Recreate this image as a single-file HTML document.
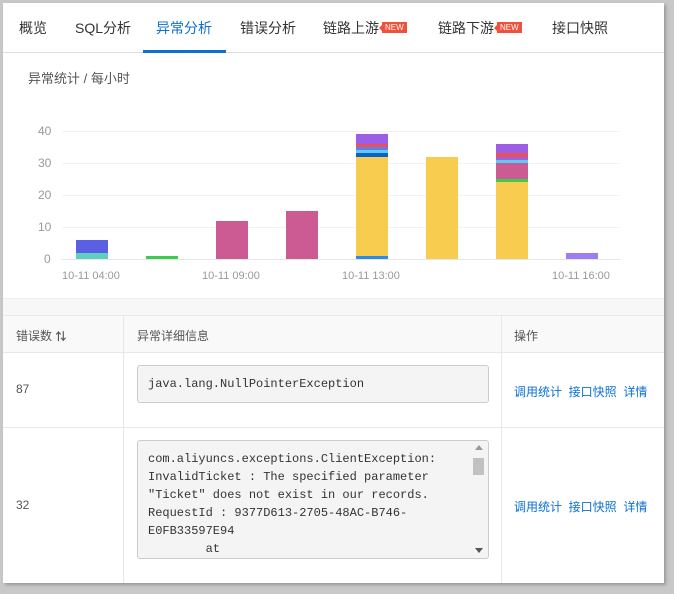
<!DOCTYPE html>
<html><head><meta charset="utf-8"><style>
*{margin:0;padding:0;box-sizing:border-box}
body{width:674px;height:594px;background:#c8c8c8;font-family:"Liberation Sans","Noto Sans CJK SC",sans-serif;position:relative;overflow:hidden}
.card{position:absolute;left:3px;top:3px;width:661px;height:580px;background:#fff;box-shadow:2px 2px 3px #999}
.tabs{position:absolute;left:0;top:0;width:661px;height:50px;border-bottom:1px solid #ddd}
.tab{position:absolute;top:15px;font-size:14px;color:#333}
.tab.on{color:#0b70d0}
.ul{position:absolute;left:140px;top:47px;width:83px;height:3px;background:#0b70d0}
.new{display:inline-block;background:#f1503a;color:#fff;font-size:8px;line-height:11px;padding:0 3px;vertical-align:top;margin-top:4px;margin-left:3px;position:relative}
.new:before{content:"";position:absolute;left:-3px;top:3px;border:3px solid transparent;border-right:3px solid #f1503a;border-left:0}
.t{position:absolute;font-size:12px;color:#999}
.g{position:absolute;left:59px;width:558px;height:1px;background:#f2f2f2}
.s{position:absolute;width:32px}
.lbl{position:absolute;font-size:11px;color:#999;top:267px}
.td{position:absolute;border-right:1px solid #e8e8e8}
.hl{position:absolute;left:0;width:661px;height:1px;background:#e8e8e8}
.box{position:absolute;left:134px;width:352px;background:#f4f4f4;border:1px solid #ccc;border-radius:3px;font-family:"Liberation Mono","Noto Sans CJK SC",monospace;font-size:12px;color:#333}
.lk{position:absolute;left:511px;font-size:12px;color:#0b70d0}
</style></head><body>
<div class="card">
<div class="tabs">
<span class="tab" style="left:16px">概览</span>
<span class="tab" style="left:72px">SQL分析</span>
<span class="tab on" style="left:153px">异常分析</span>
<span class="tab" style="left:237px">错误分析</span>
<span class="tab" style="left:320px">链路上游<span class="new">NEW</span></span>
<span class="tab" style="left:435px">链路下游<span class="new">NEW</span></span>
<span class="tab" style="left:549px">接口快照</span>
<div class="ul"></div>
</div>
<div style="position:absolute;left:25px;top:65px;font-size:13px;color:#555">异常统计 / 每小时</div>
<span class="t" style="left:35px;top:121px">40</span>
<span class="t" style="left:35px;top:153px">30</span>
<span class="t" style="left:35px;top:185px">20</span>
<span class="t" style="left:35px;top:217px">10</span>
<span class="t" style="left:41px;top:249px">0</span>
<div class="g" style="top:128px"></div><div class="g" style="top:160px"></div><div class="g" style="top:192px"></div><div class="g" style="top:224px"></div><div class="g" style="top:256px;background:#e6e6e6"></div>
<div class="s" style="left:73px;top:237px;height:12.6px;background:#5b5fe3"></div>
<div class="s" style="left:73px;top:249.6px;height:6.4px;background:#5ecfbf"></div>
<div class="s" style="left:143px;top:252.8px;height:3.2px;background:#3ecb4e"></div>
<div class="s" style="left:213px;top:217.6px;height:38.4px;background:#cd5b93"></div>
<div class="s" style="left:283px;top:208px;height:48px;background:#cd5b93"></div>
<div class="s" style="left:353px;top:131.2px;height:9.6px;background:#9d5ee6"></div>
<div class="s" style="left:353px;top:140.8px;height:3.2px;background:#e4525a"></div>
<div class="s" style="left:353px;top:144px;height:3.2px;background:#6f78e8"></div>
<div class="s" style="left:353px;top:147.2px;height:3.2px;background:#56cff0"></div>
<div class="s" style="left:353px;top:150.4px;height:3.2px;background:#0c62c8"></div>
<div class="s" style="left:353px;top:153.6px;height:99.2px;background:#f8cc4e"></div>
<div class="s" style="left:353px;top:252.8px;height:3.2px;background:#2c8aef"></div>
<div class="s" style="left:423px;top:153.6px;height:102.4px;background:#f8cc4e"></div>
<div class="s" style="left:493px;top:140.8px;height:9.6px;background:#9d5ee6"></div>
<div class="s" style="left:493px;top:150.4px;height:3.2px;background:#e4525a"></div>
<div class="s" style="left:493px;top:153.6px;height:3.2px;background:#a35ee0"></div>
<div class="s" style="left:493px;top:156.8px;height:3.2px;background:#56cff0"></div>
<div class="s" style="left:493px;top:160px;height:16px;background:#cd5b93"></div>
<div class="s" style="left:493px;top:176px;height:3.2px;background:#3ecb4e"></div>
<div class="s" style="left:493px;top:179.2px;height:76.8px;background:#f8cc4e"></div>
<div class="s" style="left:563px;top:249.6px;height:6.4px;background:#9c7ef0"></div>
<span class="lbl" style="left:59px">10-11 04:00</span>
<span class="lbl" style="left:199px">10-11 09:00</span>
<span class="lbl" style="left:339px">10-11 13:00</span>
<span class="lbl" style="left:549px">10-11 16:00</span>
<div style="position:absolute;left:0;top:295px;width:661px;height:17px;background:#f7f7f7;border-top:1px solid #eee"></div>
<div style="position:absolute;left:0;top:312px;width:661px;height:37px;background:#f9f9f9"></div>
<div class="hl" style="top:312px"></div><div class="hl" style="top:349px"></div><div class="hl" style="top:424px"></div>
<div class="td" style="left:0;top:312px;width:121px;height:268px"></div>
<div class="td" style="left:121px;top:312px;width:378px;height:268px"></div>
<div style="position:absolute;left:13px;top:324px;font-size:12px;color:#555">错误数 <b style="font-size:11px">⇅</b></div>
<div style="position:absolute;left:134px;top:324px;font-size:12px;color:#555">异常详细信息</div>
<div style="position:absolute;left:511px;top:324px;font-size:12px;color:#555">操作</div>
<div style="position:absolute;left:13px;top:379px;font-size:12px;color:#555">87</div>
<div style="position:absolute;left:13px;top:495px;font-size:12px;color:#555">32</div>
<div class="box" style="top:362px;height:38px;padding:11px 10px">java.lang.NullPointerException</div>
<div class="box" style="top:437px;height:119px;padding:9px 10px;line-height:18px;overflow:hidden;white-space:pre">com.aliyuncs.exceptions.ClientException:
InvalidTicket : The specified parameter
"Ticket" does not exist in our records.
RequestId : 9377D613-2705-48AC-B746-
E0FB33597E94
        at</div>
<div style="position:absolute;left:469px;top:440px;width:14px;height:113px">
<div style="position:absolute;left:3px;top:2px;border:4px solid transparent;border-bottom:5px solid #999;border-top:0"></div>
<div style="position:absolute;left:1px;top:15px;width:11px;height:17px;background:#c1c1c1"></div>
<div style="position:absolute;left:3px;top:105px;border:4px solid transparent;border-top:5px solid #555;border-bottom:0"></div>
</div>
<div class="lk" style="top:380px">调用统计 &nbsp;接口快照 &nbsp;详情</div>
<div class="lk" style="top:495px">调用统计 &nbsp;接口快照 &nbsp;详情</div>
</div>
</body></html>
